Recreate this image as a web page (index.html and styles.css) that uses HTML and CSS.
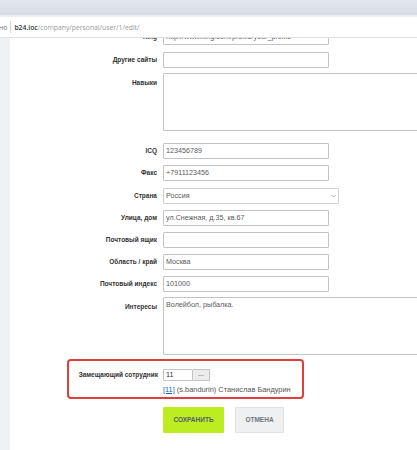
FILE: index.html
```html
<!DOCTYPE html>
<html lang="ru">
<head>
<meta charset="utf-8">
<title>b24.loc</title>
<link rel="stylesheet" href="styles.css">
</head>
<body>
<div class="chrome-top"></div>
<div class="addr">
  <span class="addr-prev">но</span>
  <span class="addr-sep"></span>
  <span class="addr-host">b24.loc</span><span class="addr-path">/company/personal/user/1/edit/</span>
</div>
<div class="page">
  <div class="side"></div>
  <div class="main">
    <div class="form">
      <div class="row"><div class="lbl">Xing</div><div class="field"><div class="inp">http://www.xing.com/profile/your_profile</div></div></div>
      <div class="row r-gap7"><div class="lbl">Другие сайты</div><div class="field"><div class="inp"></div></div></div>
      <div class="row r-gap5"><div class="lbl lbl-top">Навыки</div><div class="field"><div class="area"></div></div></div>
      <div class="row r-gap12"><div class="lbl">ICQ</div><div class="field"><div class="inp">123456789</div></div></div>
      <div class="row r-gap6"><div class="lbl">Факс</div><div class="field"><div class="inp">+7911123456</div></div></div>
      <div class="row r-gap7"><div class="lbl">Страна</div><div class="field"><div class="sel"><span>Россия</span><svg class="chev" width="5" height="4" viewBox="0 0 5 4"><path d="M0.5 1 L2.5 3 L4.5 1" fill="none" stroke="#999" stroke-width="0.8"/></svg></div></div></div>
      <div class="row r-gap6"><div class="lbl">Улица, дом</div><div class="field"><div class="inp">ул.Снежная, д.35, кв.67</div></div></div>
      <div class="row r-gap6"><div class="lbl">Почтовый ящик</div><div class="field"><div class="inp"></div></div></div>
      <div class="row r-gap6"><div class="lbl">Область / край</div><div class="field"><div class="inp">Москва</div></div></div>
      <div class="row r-gap6"><div class="lbl">Почтовый индекс</div><div class="field"><div class="inp">101000</div></div></div>
      <div class="row r-gap5"><div class="lbl lbl-top">Интересы</div><div class="field"><div class="area">Волейбол, рыбалка.</div></div></div>
      <div class="deputy">
        <div class="lbl lbl-deputy">Замещающий сотрудник</div>
        <div class="deputy-field">
          <div class="deputy-ctrl"><div class="inp-small">11</div><div class="dots">...</div></div>
          <div class="deputy-info"><a class="deputy-link" href="#">[11]</a> (s.bandurin) Станислав Бандурин</div>
        </div>
      </div>
      <div class="buttons">
        <div class="btn btn-save">СОХРАНИТЬ</div>
        <div class="btn btn-cancel">ОТМЕНА</div>
      </div>
    </div>
  </div>
</div>
</body>
</html>
```
FILE: styles.css
```css
html, body {
  margin: 0;
  padding: 0;
  width: 417px;
  height: 450px;
  overflow: hidden;
  background: #fff;
  font-family: "Liberation Sans", Arial, sans-serif;
}

.chrome-top {
  height: 15px;
  background: linear-gradient(#e3e7ed, #d8dde5);
  border-bottom: 2px solid #edf0f3;
}

.addr {
  display: flex;
  align-items: center;
  border-bottom: 1px solid #dcdfe3;
  font-family: "Open Sans", "Liberation Sans", sans-serif;
  font-size: 6.8px;
  color: #9a9a9a;
  box-sizing: border-box;
  height: 21px;
}

.addr-prev { color: #777; margin-left: -1px; }
.addr-sep {
  width: 1px;
  height: 12px;
  background: #d5d5d5;
  margin: 0 3px 0 3px;
}
.addr-host { color: #333; font-weight: 600; }
.addr-path { color: #9a9a9a; }

.page {
  display: flex;
  height: 413px;
}

.side {
  width: 10px;
  background: #eef2f5;
  flex: none;
}

.main {
  flex: 1;
  overflow: hidden;
}

.form {
  margin-top: -9px;
}

.row {
  display: grid;
  grid-template-columns: 147px 1fr;
  column-gap: 6px;
}
.r-gap5 { margin-top: 5px; }
.r-gap6 { margin-top: 6px; }
.r-gap7 { margin-top: 7px; }
.r-gap12 { margin-top: 12px; }

.lbl {
  text-align: right;
  font-size: 6.5px;
  font-weight: bold;
  color: #333;
  line-height: 16px;
  white-space: nowrap;
}
.lbl-top {
  line-height: 10px;
  padding-top: 5px;
}

.inp, .sel, .area, .inp-small {
  box-sizing: border-box;
  border: 1px solid #c3c3c3;
  border-radius: 1px;
  background: #fff;
  font-size: 7.2px;
  color: #5a5a5a;
  white-space: nowrap;
  overflow: hidden;
}

.inp {
  width: 166px;
  height: 16px;
  line-height: 14px;
  padding-left: 2px;
}

.sel {
  width: 176px;
  height: 16px;
  line-height: 14px;
  padding: 0 2px 0 2px;
  display: flex;
  align-items: center;
  justify-content: space-between;
  border-color: #d0d0d0;
}
.chev { flex: none; }

.area {
  width: 300px;
  height: 58px;
  padding: 2px 2px;
  line-height: 10px;
}

.deputy {
  margin-top: 4px;
  margin-left: 57px;
  width: 237px;
  height: 40px;
  box-sizing: border-box;
  border: 2px solid #df3f3b;
  border-radius: 4px;
  padding: 8px 0 0 7px;
  display: grid;
  grid-template-columns: 82px 1fr;
  column-gap: 5px;
}
.lbl-deputy {
  line-height: 12px;
}

.deputy-ctrl {
  display: flex;
  height: 12px;
}
.inp-small {
  width: 30px;
  height: 12px;
  line-height: 10px;
  padding-left: 2px;
  color: #333;
}
.dots {
  width: 17px;
  height: 12px;
  box-sizing: border-box;
  border: 1px solid #c3c3c3;
  border-left: none;
  background: #ececec;
  font-size: 7px;
  line-height: 8px;
  text-align: center;
  color: #333;
}

.deputy-info {
  margin-top: 4px;
  font-size: 7.4px;
  line-height: 10px;
  color: #555;
  white-space: nowrap;
}
.deputy-link {
  color: #2067b0;
  text-decoration: underline;
}

.buttons {
  margin-top: 8px;
  margin-left: 153px;
  display: flex;
  column-gap: 11px;
}

.btn {
  height: 26px;
  box-sizing: border-box;
  font-size: 6.5px;
  font-weight: bold;
  line-height: 26px;
  text-align: center;
  border-radius: 1px;
}
.btn-save {
  width: 61px;
  background: #bbed21;
  color: #535c69;
}
.btn-cancel {
  width: 49px;
  background: #eef0f2;
  border: 1px solid #dfe2e5;
  line-height: 24px;
  color: #6d747c;
}
```
